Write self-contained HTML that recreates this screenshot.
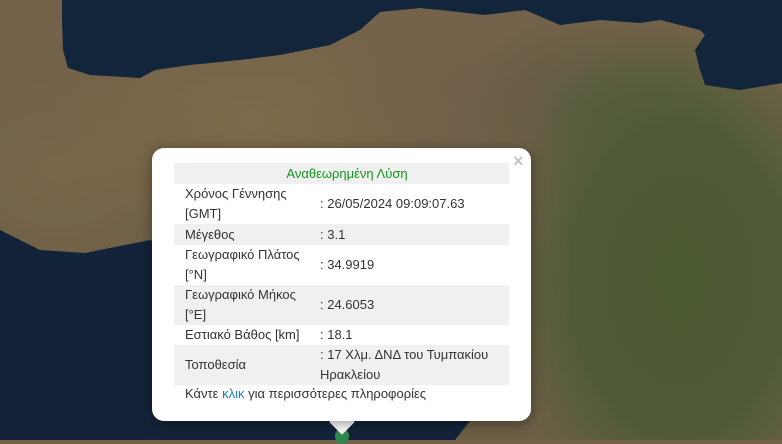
<!DOCTYPE html>
<html><head><meta charset="utf-8"><style>
html,body{margin:0;padding:0}
body{width:782px;height:440px;overflow:hidden;position:relative;font-family:"Liberation Sans",Arial,sans-serif;background:#74634a}
.map{position:absolute;inset:0;
background:
radial-gradient(ellipse 180px 260px at 680px 280px,#4c5a34 0%,#4f5b36 60%,transparent 100%),
radial-gradient(ellipse 140px 100px at 600px 110px,#5a5c40 0%,transparent 100%),
radial-gradient(ellipse 180px 100px at 500px 90px,#73604a 0%,transparent 100%),
radial-gradient(ellipse 200px 120px at 250px 120px,#7d6a4a 0%,transparent 100%),
radial-gradient(ellipse 120px 90px at 60px 170px,#78664a 0%,transparent 100%),
linear-gradient(#74634a,#6e6046);}
.pop{position:absolute;left:152px;top:148px;width:379px;height:273px;background:#fff;border-radius:12px;box-shadow:0 3px 14px rgba(0,0,0,.4)}
.tip{position:absolute;left:333px;top:413px;width:18px;height:18px;background:#fff;transform:rotate(45deg)}
.x{position:absolute;left:513px;top:151px;color:#c3c3c3;font:bold 18px "Liberation Sans",sans-serif}
table{position:absolute;left:174px;top:163px;width:335px;border-collapse:collapse;font-size:13px;color:#333}
td{padding:0 0 0 11px;line-height:20px;vertical-align:middle}
tr.g{background:#f0f0f0}
.h{text-align:center;color:#12951a;height:21px}
.foot{position:absolute;left:185px;top:386px;font-size:13px;color:#333}
.foot span{color:#1a7fc0}
.marker{position:absolute;left:335px;top:428px;width:14px;height:16px;border-radius:50%;background:#2c8a50}
</style></head><body>
<div class="map"></div>
<svg width="782" height="440" style="position:absolute;left:0;top:0">
<polygon fill="#13253b" points="62,0 62,20 63,50 68,68 90,75 140,78 155,70 190,65 240,60 280,55 330,45 360,30 380,12 400,10 420,8 440,10 485,15 525,10 560,25 600,20 640,23 660,20 700,30 705,35 695,50 700,70 705,85 740,90 782,83 782,0"/>
<polygon fill="#13243a" points="0,230 20,240 40,250 85,253 150,240 300,300 470,421 455,440 0,440"/>
</svg>
<div class="marker"></div>
<div class="tip"></div>
<div class="pop"></div>
<div class="x">×</div>
<table>
<tr class="g"><td colspan="2" class="h">Αναθεωρημένη Λύση</td></tr>
<tr style="height:40px"><td style="width:124px">Χρόνος Γέννησης<br>[GMT]</td><td>: 26/05/2024 09:09:07.63</td></tr>
<tr class="g" style="height:21px"><td>Μέγεθος</td><td>: 3.1</td></tr>
<tr style="height:40px"><td>Γεωγραφικό Πλάτος<br>[°N]</td><td>: 34.9919</td></tr>
<tr class="g" style="height:40px"><td>Γεωγραφικό Μήκος<br>[°E]</td><td>: 24.6053</td></tr>
<tr style="height:20px"><td>Εστιακό Βάθος [km]</td><td>: 18.1</td></tr>
<tr class="g" style="height:40px"><td>Τοποθεσία</td><td>: 17 Χλμ. ΔΝΔ του Τυμπακίου<br>Ηρακλείου</td></tr>
</table>
<div class="foot">Κάντε <span>κλικ</span> για περισσότερες πληροφορίες</div>
</body></html>
